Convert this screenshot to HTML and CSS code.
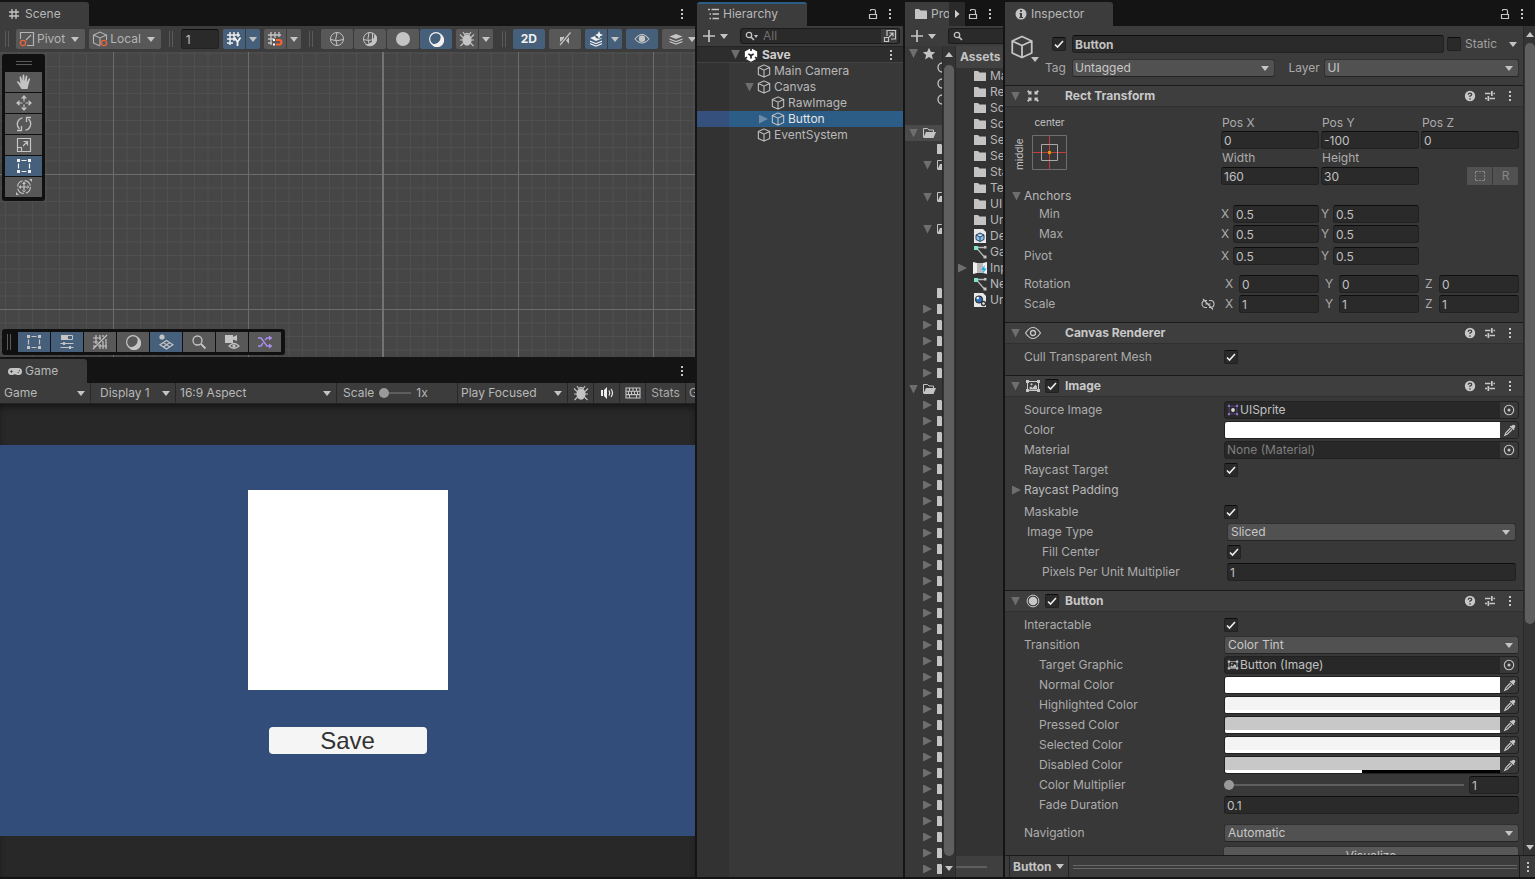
FILE: index.html
```html
<!DOCTYPE html>
<html lang="en">
<head>
<meta charset="utf-8">
<title>Editor</title>
<link rel="stylesheet" href="styles.css">
</head>
<body>
<svg class="defs" aria-hidden="true">
  <symbol id="i-hash" viewBox="0 0 12 12"><path d="M4 1v10M8 1v10M1 4h10M1 8h10" fill="none" stroke="currentColor" stroke-width="1.3"/></symbol>
  <symbol id="i-dots" viewBox="0 0 14 14"><path d="M6 2h2v2H6zM6 6h2v2H6zM6 10h2v2H6z" fill="currentColor"/></symbol>
  <symbol id="i-lock" viewBox="0 0 14 14"><path d="M3.500 7.500h7v4h-7zM4.500 4V3.500q0-1 1-1h2.500q1.500 0 1.500 1.500v3.500" fill="none" stroke="currentColor" stroke-width="1.200"/></symbol>
  <symbol id="i-pivot" viewBox="0 0 16 16"><path d="M1.500 8V1.500h13v13H8M7 9l5-5" fill="none" stroke="currentColor" stroke-width="1.200"/><circle cx="4" cy="12" r="2.600" fill="none" stroke="#e8633a" stroke-width="1.400"/></symbol>
  <symbol id="i-local" viewBox="0 0 16 16"><path d="M8 15L1.500 12V4L8 1l6.500 3v5M1.500 4L8 7l6.500-3M8 7v7" fill="none" stroke="currentColor" stroke-width="1.100"/><circle cx="12" cy="12" r="2.600" fill="none" stroke="#e8633a" stroke-width="1.400"/></symbol>
  <symbol id="i-gridy" viewBox="0 0 16 16"><path d="M4 1v13M8 1v9M12 1v5M1 4h13M1 8h8M1 12h6" fill="none" stroke="currentColor" stroke-width="1.400"/><path d="M8.500 6.500l3 4.500 3-4.500M11.500 11v4" fill="none" stroke="currentColor" stroke-width="1.800"/></symbol>
  <symbol id="i-snap" viewBox="0 0 16 16"><path d="M4 1v13M8 1v6M12 1v5M1 4h13M1 8h6M1 12h4" fill="none" stroke="currentColor" stroke-width="1.300"/><path d="M9 9h3.200a2.200 2.200 0 010 4.500H9" fill="none" stroke="#ff5f34" stroke-width="2"/><path d="M6 8h2v2H6zM6 12.500h2v2H6z" fill="#fff"/></symbol>
  <symbol id="i-wire" viewBox="0 0 16 16"><g fill="none" stroke="currentColor"><circle cx="8" cy="8" r="6.500"/><path d="M1.500 8.500q6.500 2.500 13 0M8 1.500Q5.500 8 8 14.500"/></g></symbol>
  <symbol id="i-wireshade" viewBox="0 0 16 16"><path d="M12.500 2.500A7 7 0 013 13.500Q12 13 12.500 2.500z" fill="currentColor"/><g fill="none" stroke="currentColor"><circle cx="8" cy="8" r="6.500"/><path d="M1.500 8.500q5 2 10 0M7 1.500Q5 8 7 13M10.500 2v8"/></g></symbol>
  <symbol id="i-disc" viewBox="0 0 16 16"><circle cx="8" cy="8" r="7" fill="currentColor"/></symbol>
  <symbol id="i-moon" viewBox="0 0 16 16"><circle cx="8" cy="8" r="6.400" fill="none" stroke="currentColor" stroke-width="1.200"/><path d="M12 2.800A7 7 0 113 12.500Q6 14 9.500 12 14 9 12 2.800z" fill="currentColor"/></symbol>
  <symbol id="i-bug" viewBox="0 0 16 16"><ellipse cx="8" cy="9" rx="4.600" ry="5.800" fill="currentColor"/><path d="M5 4q3-3.500 6 0M4 1l2 3M12 1l-2 3M1 3.500l3 3M15 3.500l-3 3M1 9h3M15 9h-3M1.500 15l3-3M14.500 15l-3-3" fill="none" stroke="currentColor" stroke-width="1.100"/></symbol>
  <symbol id="i-mute" viewBox="0 0 16 16"><path d="M13.500 1.500L3 14" stroke="currentColor" stroke-width="1.200"/><path d="M3 6h3l1-1v2l-3 3.500H3zM9 9.500l3-3.500v7z" fill="currentColor"/></symbol>
  <symbol id="i-fx" viewBox="0 0 16 16"><path d="M2 7l5-2 1 2 3 1 2-1 1 .5-6 2.500zM2 9.500l6 2.500 6-2.500v1.200L8 13.200 2 10.700zM2 12l6 2.500 6-2.500v1.200L8 15.700 2 13.200zM11 0l1.200 2.800L15 4l-2.800 1.200L11 8 9.800 5.200 7 4l2.800-1.200z" fill="currentColor"/></symbol>
  <symbol id="i-eye" viewBox="0 0 16 16"><path d="M1 8q7-9 14 0-7 8-14 0z" fill="none" stroke="currentColor" stroke-width="1.100"/><circle cx="8" cy="7.800" r="3.200" fill="currentColor"/></symbol>
  <symbol id="i-eyering" viewBox="0 0 16 16"><path d="M.5 8q7.500-11 15 0-7.500 11-15 0z" fill="none" stroke="currentColor" stroke-width="1.200"/><circle cx="8" cy="8" r="2.500" fill="none" stroke="currentColor" stroke-width="1.300"/></symbol>
  <symbol id="i-layers" viewBox="0 0 16 16"><path d="M8 3l6.500 2.500L8 8 1.500 5.500zM1.500 7.500L8 10l6.500-2.500v1.300L8 11.300 1.500 8.800zM1.500 10L8 12.500 14.500 10v1.300L8 13.800 1.500 11.300z" fill="currentColor"/></symbol>
  <symbol id="i-hand" viewBox="0 0 16 16"><path d="M5.500 15L3 11 .8 7.800q.8-1.200 2 0L4.500 9.500 3.500 3q.9-1.300 1.700 0L6.300 7 6.600 1q.9-1 1.700 0L8.500 7l1.300-5q1-.9 1.600.2L10.800 8l2-3.500q1-.6 1.400.3L12.700 10 11.500 15z" fill="currentColor"/></symbol>
  <symbol id="i-move" viewBox="0 0 16 16"><path d="M8 0l3 3.500H5zM8 16l3-3.500H5zM0 8l3.500-3v6zM16 8l-3.500-3v6zM7.400 3h1.200v3.500H7.400zM7.400 9.500h1.200V13H7.400zM3 7.400h3.500v1.200H3zM9.500 7.400H13v1.200H9.500z" fill="currentColor"/></symbol>
  <symbol id="i-rotate" viewBox="0 0 16 16"><path d="M6.500 1.800A6.500 6.500 0 003.500 13M9.500 14.200A6.500 6.500 0 0012.500 3M1 14.500h4.500V10M15 1.500h-4.500V6" fill="none" stroke="currentColor" stroke-width="1.300"/></symbol>
  <symbol id="i-scale" viewBox="0 0 16 16"><path d="M1.500 1.500h13v13h-13zM1.500 10.500h4v4M7 9l4.500-4.500M7.500 4.500h4v4" fill="none" stroke="currentColor" stroke-width="1.200"/></symbol>
  <symbol id="i-rect" viewBox="0 0 16 16"><path d="M1 1h3v3H1zM12 1h3v3h-3zM1 12h3v3H1zM12 12h3v3h-3z" fill="currentColor"/><path d="M5.500 2.500h5M5.500 13.500h5M2.500 5.500v5M13.500 5.500v5" stroke="currentColor" stroke-width="1.200"/></symbol>
  <symbol id="i-transform" viewBox="0 0 16 16"><circle cx="8" cy="8" r="6.400" fill="none" stroke="currentColor" stroke-width="1.100" stroke-dasharray="8 2"/><path d="M8 2.500l2 2.500H6zM8 13.500l2-2.500H6zM2.500 8L5 6v4zM13.500 8L11 6v4zM7.400 4h1.200v8H7.400zM4 7.400h8v1.200H4zM13 0h3v3zM0 13v3h3z" fill="currentColor"/></symbol>
  <symbol id="i-sliders2" viewBox="0 0 16 16"><path d="M2.500 1.500h11v4h-11z" fill="none" stroke="currentColor"/><path d="M2 1h7v5H2zM4 8h2v3H4zM10 12h2v3h-2z" fill="currentColor"/><path d="M1.500 9.500h13M1.500 13.500h13" stroke="currentColor" stroke-width="1.200"/></symbol>
  <symbol id="i-gridoff" viewBox="0 0 16 16"><path d="M4 1v9M8 1v5M11 7v8M14 5v10M8 10v5M1 4h8M1 8h5M1 12h3M15 1L1 15M9 12h6M11 1v2M6 12h3" fill="none" stroke="currentColor" stroke-width="1.200"/></symbol>
  <symbol id="i-gizmo" viewBox="0 0 16 16"><circle cx="4" cy="3" r="2.600" fill="currentColor"/><path d="M8.500 6.500L15 10.700 8.500 15 2 10.700zM5.300 8.500l6.500 4.400M11.800 8.500l-6.500 4.400" fill="none" stroke="currentColor" stroke-width="1.200"/></symbol>
  <symbol id="i-search" viewBox="0 0 16 16"><circle cx="6.500" cy="6.500" r="4.500" fill="none" stroke="currentColor" stroke-width="1.300"/><path d="M10 10l4.500 4.500" stroke="currentColor" stroke-width="1.800"/></symbol>
  <symbol id="i-find" viewBox="0 0 12 10"><circle cx="4" cy="4" r="2.700" fill="none" stroke="currentColor" stroke-width="1.300"/><path d="M6 6l3 3" stroke="currentColor" stroke-width="1.600"/></symbol>
  <symbol id="i-cam" viewBox="0 0 16 16"><path d="M1 1h8v2l4-2v6L9 5.500V9H1z" fill="currentColor"/><path d="M5 12q5-5 10 0-5 4.500-10 0z" fill="none" stroke="currentColor" stroke-width="1.200"/><circle cx="10" cy="12" r="1.600" fill="currentColor"/></symbol>
  <symbol id="i-shuffle" viewBox="0 0 16 16"><path d="M1 4h3l6 8h3M1 12h3l2-3M8 6l2-2h3" fill="none" stroke="#ab8df2" stroke-width="1.400"/><path d="M12 1.500L15.500 4 12 6.500zM12 9.500l3.500 2.500-3.500 2.500z" fill="#ab8df2"/></symbol>
  <symbol id="i-pad" viewBox="0 0 16 10"><path d="M4 1h8a4 4 0 010 8c-2 0-2-1-4-1S6 9 4 9a4 4 0 010-8z" fill="currentColor"/><path d="M2.500 5h3M4 3.500v3" stroke="#3c3c3c"/><path d="M11 5.500h1.200v1.200H11zM12.500 3.500h1.200v1.200h-1.200z" fill="#3c3c3c"/></symbol>
  <symbol id="i-audio" viewBox="0 0 16 16"><path d="M2 5h2v6H2zM5 5l3-3v12l-3-3z" fill="currentColor"/><path d="M10 5.500q1.500 2.500 0 5M12 4q3 4 0 8" fill="none" stroke="currentColor" stroke-width="1.200"/></symbol>
  <symbol id="i-keys" viewBox="0 0 16 12"><path d="M1 1h14v10H1zM1 4.300h14M1 7.600h14M4.500 1v3.300M8 1v3.300M11.500 1v3.300M3.500 4.300v3.300M6.500 4.300v3.300M9.500 4.300v3.300M12.500 4.300v3.300M4.500 7.600V11M11.500 7.600V11" fill="none" stroke="currentColor" stroke-width="1.100"/></symbol>
  <symbol id="i-tree" viewBox="0 0 12 12"><path d="M1 1.500h2M4.500 1.500H12M2.500 6H4M5.500 6H12M2.500 10.500H4M5.500 10.500H12" stroke="currentColor" stroke-width="1.300"/></symbol>
  <symbol id="i-plus" viewBox="0 0 12 12"><path d="M6 0v12M0 6h12" stroke="currentColor" stroke-width="1.700"/></symbol>
  <symbol id="i-open" viewBox="0 0 14 14"><path d="M4 7V1.500h8.500v8.500H8M1.500 8.500h4v4h-4zM6 8l4-4M6.500 4H10v3.500" fill="none" stroke="currentColor" stroke-width="1.200"/></symbol>
  <symbol id="i-unity" viewBox="0 0 16 16"><path d="M8 .3L15 4v8l-7 3.700L1 12V4z" fill="#fff"/><path d="M8 8.500V12M8 8.500L5 6.800M8 8.500l3-1.700M8 0v3.500M0 12.500L3.500 10.500M16 12.500l-3.500-2" stroke="#2c2c2c" stroke-width="2"/></symbol>
  <symbol id="i-cube" viewBox="0 0 16 16"><path d="M8 1l6.500 3v8L8 15l-6.500-3V4zM1.500 4L8 7l6.500-3M8 7v8" fill="none" stroke="currentColor" stroke-width="1.200" stroke-linejoin="round"/></symbol>
  <symbol id="i-folder" viewBox="0 0 14 12"><path d="M1 1.500Q1 1 1.500 1H5l1.500 1.500h6q.5 0 .5.500v7.500q0 .5-.5.500h-11Q1 11 1 10.500z" fill="currentColor"/></symbol>
  <symbol id="i-folderopen" viewBox="0 0 14 12"><path d="M1.500 10V1.500h4L7 3h4.500v2" fill="none" stroke="currentColor"/><path d="M4 5h10l-2.500 6H1.200z" fill="currentColor"/></symbol>
  <symbol id="i-star" viewBox="0 0 14 14"><path d="M7 .8l1.800 4 4.400.4-3.300 2.900 1 4.300L7 10.100l-3.900 2.300 1-4.300L.8 5.200l4.400-.4z" fill="currentColor"/></symbol>
  <symbol id="i-prefab" viewBox="0 0 14 14"><path d="M1 0h9l3 3v11H1z" fill="#e8e8e8"/><path d="M7 4l4 2v4.500l-4 2-4-2V6zM3 6l4 2 4-2M7 8v4" fill="#8cc4f2" stroke="#24405e"/></symbol>
  <symbol id="i-curve" viewBox="0 0 14 14"><path d="M3 2.500h9L3 2.500l8 9" fill="none" stroke="#b9b9b9" stroke-width="1.300"/><path d="M1 1h4v4H1z" fill="#7fe6cf"/><path d="M11 1h2.500v2.500H11zM10.500 10.500h3v3h-3z" fill="#c4c4c4"/></symbol>
  <symbol id="i-input" viewBox="0 0 14 14"><path d="M0 1l4 1v10l-4 1zM10 2l4-1v12l-4-1z" fill="#f0f0f0"/><path d="M4 2h6v10H4z" fill="#b8b8b8"/><path d="M11.500 4L8.500 9h2l-1 4 4-5.500h-2z" fill="#17a9e6"/></symbol>
  <symbol id="i-asset" viewBox="0 0 14 14"><path d="M1 0h9l3 3v11H1z" fill="#e8e8e8"/><circle cx="6" cy="6.500" r="3.600" fill="#2b6cb5" stroke="#222"/><circle cx="10.500" cy="10.500" r="2" fill="#e8e8e8" stroke="#333" stroke-width="1.300"/><circle cx="4.800" cy="5" r="1.200" fill="#fff"/></symbol>
  <symbol id="i-info" viewBox="0 0 14 14"><circle cx="7" cy="7" r="5.500" fill="currentColor"/><path d="M6 3h2v1.800H6zM5.500 6H8v4h1v1H5.300v-1H6V7h-.5z" fill="#3c3c3c"/></symbol>
  <symbol id="i-help" viewBox="0 0 14 14"><circle cx="7" cy="7" r="5.200" fill="currentColor"/><path d="M5.300 5.700q0-1.500 1.700-1.500t1.700 1.300q0 .8-1.700 1.500v1M7 9.300v1.400" fill="none" stroke="#3e3e3e" stroke-width="1.300"/></symbol>
  <symbol id="i-preset" viewBox="0 0 14 14"><path d="M2 4.500h5.500M10.500 4.500H12M2 9.500h2M6.500 9.500H12" stroke="currentColor" stroke-width="1.300"/><path d="M8 2h1.700v5H8zM4.500 7h1.700v5H4.500z" fill="currentColor"/></symbol>
  <symbol id="i-rt" viewBox="0 0 16 16"><path id="w" d="M2 3.500L3.500 2l1.300 1.500L6.500 3v3.500H3l.5-1.700zM14 3.500L12.500 2l-1.300 1.500L9.500 3v3.500H13l-.5-1.700zM2 12.500L3.500 14l1.300-1.500 1.700.5V9.500H3l.5 1.700zM14 12.500L12.500 14l-1.300-1.500-1.700.5V9.500H13l-.5 1.700z" fill="currentColor"/></symbol>
  <symbol id="i-image" viewBox="0 0 16 16"><path d="M2.500 3.500h11v9h-11z" fill="none" stroke="currentColor"/><path d="M1 2h3v3H1zM12 2h3v3h-3zM1 11h3v3H1zM12 11h3v3h-3zM4.500 11.500V9.500L6 8.500 7.500 10l3-3.500 1.500 2v3z" fill="currentColor"/><circle cx="6.500" cy="6.300" r="1.100" fill="currentColor"/></symbol>
  <symbol id="i-radio" viewBox="0 0 16 16"><circle cx="8" cy="8" r="5.900" fill="none" stroke="currentColor"/><circle cx="8" cy="8" r="4.300" fill="currentColor"/></symbol>
  <symbol id="i-sprite" viewBox="0 0 14 14"><path d="M2.500 2.500h9v9h-9z" fill="none" stroke="#5c4a86"/><path d="M1 1h2.500v2.500H1zM10.500 1H13v2.500h-2.500zM1 10.500h2.500V13H1zM10.500 10.500H13V13h-2.500z" fill="#8b6cc9"/><circle cx="7" cy="7" r="2.200" fill="#d8d8d8"/></symbol>
  <symbol id="i-target" viewBox="0 0 14 14"><circle cx="7" cy="7" r="4.700" fill="none" stroke="currentColor" stroke-width="1.100"/><circle cx="7" cy="7" r="1.500" fill="currentColor"/></symbol>
  <symbol id="i-dropper" viewBox="0 0 14 14"><path d="M9.500 3q2-2 3.300-.7T12 5.500l.6.800-1 1L7.800 3.500l1-1z" fill="currentColor"/><path d="M8.500 5L4 9.500l-1.200 2.700L5.500 11 10 6.500" fill="none" stroke="currentColor" stroke-width="1.200"/></symbol>
  <symbol id="i-unlink" viewBox="0 0 14 14"><path d="M6 10.500H4.500a3.500 3.500 0 010-7H6M8 3.500h1.500a3.500 3.500 0 010 7H8M4.500 7h5M2 2l10 10.500" fill="none" stroke="currentColor" stroke-width="1.100"/></symbol>
  <symbol id="i-blue" viewBox="0 0 14 14"><path d="M2.500 5V2.500H5M9 2.500h2.500V5M11.500 9v2.500H9M5 11.500H2.500V9M6 2.500h2M6 11.500h2M2.500 6v2M11.500 6v2" fill="none" stroke="currentColor"/></symbol>
</svg>

<main class="editor">
  <div class="left">
    <section class="panel scene" aria-label="Scene">
      <header class="tabs"><button class="tab scene-tab"><svg class="s12"><use href="#i-hash"/></svg>Scene</button><button class="bare push" aria-label="Scene menu"><svg class="s14"><use href="#i-dots"/></svg></button></header>
      <div class="scene-bar">
        <i class="grip"></i>
        <button class="tool text">
          <svg class="s16"><use href="#i-pivot"/></svg>Pivot<i class="caret"></i></button>
        <button class="tool text">
          <svg class="s16"><use href="#i-local"/></svg>Local<i class="caret"></i></button>
        <i class="grip mid"></i>
        <input class="field snap" value="1" aria-label="Grid size">
        <span class="split"><button class="tool half on" aria-label="Grid snapping"><svg class="s16"><use href="#i-gridy"/></svg></button><button class="tool drop on dim" aria-label="Grid options"><i class="caret"></i></button></span>
        <span class="split"><button class="tool half" aria-label="Snap"><svg class="s16"><use href="#i-snap"/></svg></button><button class="tool drop" aria-label="Snap options"><i class="caret"></i></button></span>
        <i class="grip mid"></i>
        <span class="split">
          <button class="tool" aria-label="Wireframe"><svg class="s16"><use href="#i-wire"/></svg></button>
          <button class="tool" aria-label="Shaded wireframe"><svg class="s16"><use href="#i-wireshade"/></svg></button>
          <button class="tool" aria-label="Unlit"><svg class="s16"><use href="#i-disc"/></svg></button>
          <button class="tool on" aria-label="Shaded"><svg class="s16"><use href="#i-moon"/></svg></button>
        </span>
        <span class="split"><button class="tool half" aria-label="Debug draw"><svg class="s16"><use href="#i-bug"/></svg></button><button class="tool drop" aria-label="Debug options"><i class="caret"></i></button></span>
        <i class="grip mid late"></i>
        <button class="tool on strong">2D</button>
        <button class="tool dim" aria-label="Audio"><svg class="s16"><use href="#i-mute"/></svg></button>
        <span class="split"><button class="tool half on" aria-label="Effects"><svg class="s16"><use href="#i-fx"/></svg></button><button class="tool drop on dim" aria-label="Effects options"><i class="caret"></i></button></span>
        <button class="tool on dim" aria-label="Visibility"><svg class="s16"><use href="#i-eye"/></svg></button>
        <button class="tool last" aria-label="Layers"><svg class="s16"><use href="#i-layers"/></svg><i class="caret"></i></button>
      </div>
      <div class="viewport">
        <svg class="grid" aria-hidden="true">
          <defs><pattern id="cells" x="113" y="122" width="135" height="135" patternUnits="userSpaceOnUse">
            <path d="M14 0v135M27.500 0v135M41 0v135M54.500 0v135M68 0v135M81.500 0v135M95 0v135M108.500 0v135M122 0v135M0 14h135M0 27.500h135M0 41h135M0 54.500h135M0 68h135M0 81.500h135M0 95h135M0 108.500h135M0 122h135" stroke="#4f4f4f"/>
            <path d="M.5 0v135M0 .5h135" stroke="#6c6c6c"/></pattern></defs>
          <rect width="100%" height="100%" fill="url(#cells)"/>
          <path d="M383 0v400" stroke="#737373" stroke-width="2"/>
        </svg>
        <div class="palette tall">
          <i class="handle"></i>
          <button class="tool" aria-label="View"><svg class="s16"><use href="#i-hand"/></svg></button>
          <button class="tool" aria-label="Move"><svg class="s16"><use href="#i-move"/></svg></button>
          <button class="tool" aria-label="Rotate"><svg class="s16"><use href="#i-rotate"/></svg></button>
          <button class="tool" aria-label="Scale"><svg class="s16"><use href="#i-scale"/></svg></button>
          <button class="tool on" aria-label="Rect"><svg class="s16"><use href="#i-rect"/></svg></button>
          <button class="tool" aria-label="Transform"><svg class="s16"><use href="#i-transform"/></svg></button>
        </div>
        <div class="palette wide">
          <i class="grip"></i>
          <button class="tool on dim" aria-label="Tools"><svg class="s16"><use href="#i-rect"/></svg></button>
          <button class="tool on dim" aria-label="Tool settings"><svg class="s16"><use href="#i-sliders2"/></svg></button>
          <button class="tool" aria-label="Grid and snap"><svg class="s16"><use href="#i-gridoff"/></svg></button>
          <button class="tool" aria-label="Draw modes"><svg class="s16"><use href="#i-moon"/></svg></button>
          <button class="tool on dim" aria-label="View options"><svg class="s16"><use href="#i-gizmo"/></svg></button>
          <button class="tool" aria-label="Search"><svg class="s16"><use href="#i-search"/></svg></button>
          <button class="tool" aria-label="Cameras"><svg class="s16"><use href="#i-cam"/></svg></button>
          <button class="tool" aria-label="Shuffle"><svg class="s16"><use href="#i-shuffle"/></svg></button>
        </div>
      </div>
    </section>

    <section class="panel game" aria-label="Game">
      <header class="tabs"><button class="tab game-tab"><svg class="pad"><use href="#i-pad"/></svg>Game</button><button class="bare push" aria-label="Game menu"><svg class="s14"><use href="#i-dots"/></svg></button></header>
      <div class="game-bar">
        <span class="pick g1"><select aria-label="Mode"><option>Game</option></select></span>
        <span class="pick g2"><select aria-label="Display"><option>Display 1</option></select></span>
        <span class="pick g3"><select aria-label="Aspect"><option>16:9 Aspect</option></select></span>
        <label class="zoom">Scale<input type="range" class="range" min="1" max="5" value="1"><span>1x</span></label>
        <span class="pick g4"><select aria-label="Play mode"><option>Play Focused</option></select></span>
        <button class="gbtn" aria-label="Debug"><svg class="s16"><use href="#i-bug"/></svg></button>
        <button class="gbtn lit" aria-label="Sound"><svg class="s16"><use href="#i-audio"/></svg></button>
        <button class="gbtn" aria-label="Shortcuts"><svg class="keys"><use href="#i-keys"/></svg></button>
        <button class="gbtn stats">Stats</button>
        <button class="gbtn giz">Gizmos</button>
      </div>
      <div class="stage">
        <div class="screen"><div class="raw"></div><button class="save">Save</button></div>
      </div>
    </section>
  </div>

  <section class="panel hierarchy" aria-label="Hierarchy">
    <header class="tabs"><button class="tab active"><svg class="s12"><use href="#i-tree"/></svg>Hierarchy</button><span class="push pair"><button class="bare" aria-label="Lock"><svg class="s14"><use href="#i-lock"/></svg></button><button class="bare" aria-label="Menu"><svg class="s14"><use href="#i-dots"/></svg></button></span></header>
    <div class="find-bar">
      <button class="bare add" aria-label="Create"><svg class="s12"><use href="#i-plus"/></svg><i class="caret"></i></button>
      <label class="find"><svg class="mag"><use href="#i-find"/></svg><i class="caret tiny"></i><input placeholder="All" aria-label="Search hierarchy"><button class="bare opener" aria-label="Open search"><svg class="s14"><use href="#i-open"/></svg></button></label>
    </div>
    <div class="nodes">
      <div class="node root"><i class="tri down"></i><svg class="s14"><use href="#i-unity"/></svg><b>Save</b><button class="bare push" aria-label="Scene options"><svg class="s14"><use href="#i-dots"/></svg></button></div>
      <div class="node l1"><i class="tri"></i><svg class="s14"><use href="#i-cube"/></svg>Main Camera</div>
      <div class="node l1"><i class="tri down"></i><svg class="s14"><use href="#i-cube"/></svg>Canvas</div>
      <div class="node l2"><i class="tri"></i><svg class="s14"><use href="#i-cube"/></svg>RawImage</div>
      <div class="node l2 selected"><i class="tri right"></i><svg class="s14"><use href="#i-cube"/></svg>Button</div>
      <div class="node l1"><i class="tri"></i><svg class="s14"><use href="#i-cube"/></svg>EventSystem</div>
    </div>
  </section>

  <section class="panel project" aria-label="Project">
    <header class="tabs"><button class="tab proj-tab"><svg class="fold"><use href="#i-folder"/></svg>Project</button><button class="bare more" aria-label="More tabs"><i class="tri right"></i></button><span class="push pair"><button class="bare" aria-label="Lock"><svg class="s14"><use href="#i-lock"/></svg></button><button class="bare" aria-label="Menu"><svg class="s14"><use href="#i-dots"/></svg></button></span></header>
    <div class="find-bar">
      <button class="bare add" aria-label="Create"><svg class="s12"><use href="#i-plus"/></svg><i class="caret"></i></button>
      <label class="find cut"><svg class="mag"><use href="#i-find"/></svg><input aria-label="Search project"></label>
    </div>
    <div class="browser">
      <div class="folders" id="folders"></div>
      <div class="scroll"><i class="caret up"></i><i class="thumb"></i><i class="caret"></i></div>
      <div class="assets">
        <b class="crumb">Assets</b>
        <div class="files" id="files"></div>
        <div class="size"><i></i></div>
      </div>
    </div>
  </section>

  <section class="panel inspector" aria-label="Inspector">
    <header class="tabs"><button class="tab insp-tab"><svg class="s14"><use href="#i-info"/></svg>Inspector</button><span class="push pair"><button class="bare" aria-label="Lock"><svg class="s14"><use href="#i-lock"/></svg></button><button class="bare" aria-label="Menu"><svg class="s14"><use href="#i-dots"/></svg></button></span></header>
    <div class="insp-body">
      <div class="components">
        <div class="object">
          <button class="bare kind" aria-label="Icon"><svg class="s24"><use href="#i-cube"/></svg><i class="caret"></i></button>
          <div class="object-rows">
            <div class="line"><input type="checkbox" class="check" checked aria-label="Active"><input class="field name" value="Button" aria-label="Name"><label class="static"><input type="checkbox" class="check">Static</label><button class="bare st" aria-label="Static options"><i class="caret"></i></button></div>
            <div class="line"><label for="tag" class="tag">Tag</label><span class="pick box tagbox"><select id="tag"><option>Untagged</option></select></span><label for="layer" class="layer">Layer</label><span class="pick box"><select id="layer"><option>UI</option></select></span></div>
          </div>
        </div>

        <h2 class="comp"><i class="tri down"></i><svg class="s16"><use href="#i-rt"/></svg><span></span><span class="title">Rect Transform</span><span class="acts"><svg class="s14"><use href="#i-help"/></svg><svg class="s14"><use href="#i-preset"/></svg><svg class="s14"><use href="#i-dots"/></svg></span></h2>
        <div class="body rect">
          <div class="rect-top">
            <div class="anchor"><span class="mid-label">middle</span><span class="ctr-label">center</span>
              <svg class="preset" viewBox="0 0 35 35"><path d="M.5.5h34v34H.5z" fill="none" stroke="#6e6e6e"/><path d="M17.500 1v33M1 17.500h33" stroke="#c43c3c"/><path d="M9.500 9.500h16v16h-16z" fill="none" stroke="#a8a8a8"/><path d="M16 16h3v3h-3z" fill="#d99a00"/></svg></div>
            <div class="pos">
              <label for="px">Pos X</label><label for="py">Pos Y</label><label for="pz">Pos Z</label>
              <input class="field" id="px" value="0"><input class="field" id="py" value="-100"><input class="field" id="pz" value="0">
              <label for="pw">Width</label><label for="ph">Height</label><span></span>
              <input class="field" id="pw" value="160"><input class="field" id="ph" value="30"><span class="modes"><button aria-label="Blueprint mode"><svg class="s14"><use href="#i-blue"/></svg></button><button>R</button></span>
            </div>
          </div>
          <div class="fold-row anchors"><i class="tri down"></i>Anchors</div>
          <div class="vec"><span class="in2">Min</span><label>X<input class="field" value="0.5"></label><label>Y<input class="field" value="0.5"></label></div>
          <div class="vec"><span class="in2">Max</span><label>X<input class="field" value="0.5"></label><label>Y<input class="field" value="0.5"></label></div>
          <div class="vec gap2"><span class="in1">Pivot</span><label>X<input class="field" value="0.5"></label><label>Y<input class="field" value="0.5"></label></div>
          <div class="vec v3 gap8"><span class="in1">Rotation</span><label>X<input class="field" value="0"></label><label>Y<input class="field" value="0"></label><label>Z<input class="field" value="0"></label></div>
          <div class="vec v3"><span class="in1">Scale<svg class="s14"><use href="#i-unlink"/></svg></span><label>X<input class="field" value="1"></label><label>Y<input class="field" value="1"></label><label>Z<input class="field" value="1"></label></div>
        </div>

        <h2 class="comp"><i class="tri down"></i><svg class="s16"><use href="#i-eyering"/></svg><span></span><span class="title">Canvas Renderer</span><span class="acts"><svg class="s14"><use href="#i-help"/></svg><svg class="s14"><use href="#i-preset"/></svg><svg class="s14"><use href="#i-dots"/></svg></span></h2>
        <div class="body">
          <label class="row"><span class="in1">Cull Transparent Mesh</span><input type="checkbox" class="check" checked></label>
        </div>

        <h2 class="comp"><i class="tri down"></i><svg class="s16"><use href="#i-image"/></svg><input type="checkbox" class="check" checked aria-label="Image enabled"><span class="title">Image</span><span class="acts"><svg class="s14"><use href="#i-help"/></svg><svg class="s14"><use href="#i-preset"/></svg><svg class="s14"><use href="#i-dots"/></svg></span></h2>
        <div class="body">
          <div class="row"><span class="in1">Source Image</span><button class="obj"><svg class="s12"><use href="#i-sprite"/></svg>UISprite<svg class="s14 end"><use href="#i-target"/></svg></button></div>
          <div class="row"><span class="in1">Color</span><button class="color" aria-label="Color"><i class="swatch white"></i><svg class="s14 end"><use href="#i-dropper"/></svg></button></div>
          <div class="row"><span class="in1">Material</span><button class="obj none">None (Material)<svg class="s14 end"><use href="#i-target"/></svg></button></div>
          <label class="row"><span class="in1">Raycast Target</span><input type="checkbox" class="check" checked></label>
          <div class="fold-row"><i class="tri right"></i>Raycast Padding</div>
          <label class="row gap2"><span class="in1">Maskable</span><input type="checkbox" class="check" checked></label>
          <label class="row shift"><span class="in1">Image Type</span><span class="pick box"><select><option>Sliced</option></select></span></label>
          <label class="row shift"><span class="in2">Fill Center</span><input type="checkbox" class="check" checked></label>
          <label class="row shift"><span class="in2">Pixels Per Unit Multiplier</span><input class="field" value="1"></label>
        </div>

        <h2 class="comp"><i class="tri down"></i><svg class="s16"><use href="#i-radio"/></svg><input type="checkbox" class="check" checked aria-label="Button enabled"><span class="title">Button</span><span class="acts"><svg class="s14"><use href="#i-help"/></svg><svg class="s14"><use href="#i-preset"/></svg><svg class="s14"><use href="#i-dots"/></svg></span></h2>
        <div class="body">
          <label class="row"><span class="in1">Interactable</span><input type="checkbox" class="check" checked></label>
          <label class="row"><span class="in1">Transition</span><span class="pick box"><select><option>Color Tint</option></select></span></label>
          <div class="row"><span class="in2">Target Graphic</span><button class="obj"><svg class="s12"><use href="#i-image"/></svg>Button (Image)<svg class="s14 end"><use href="#i-target"/></svg></button></div>
          <div class="row"><span class="in2">Normal Color</span><button class="color" aria-label="Normal Color"><i class="swatch white"></i><svg class="s14 end"><use href="#i-dropper"/></svg></button></div>
          <div class="row"><span class="in2">Highlighted Color</span><button class="color" aria-label="Highlighted Color"><i class="swatch pale"></i><svg class="s14 end"><use href="#i-dropper"/></svg></button></div>
          <div class="row"><span class="in2">Pressed Color</span><button class="color" aria-label="Pressed Color"><i class="swatch grey"></i><svg class="s14 end"><use href="#i-dropper"/></svg></button></div>
          <div class="row"><span class="in2">Selected Color</span><button class="color" aria-label="Selected Color"><i class="swatch pale"></i><svg class="s14 end"><use href="#i-dropper"/></svg></button></div>
          <div class="row"><span class="in2">Disabled Color</span><button class="color" aria-label="Disabled Color"><i class="swatch grey half"></i><svg class="s14 end"><use href="#i-dropper"/></svg></button></div>
          <div class="row"><label class="in2" for="mult">Color Multiplier</label><span class="slide"><input type="range" class="range" id="mult" min="1" max="5" value="1"><input class="field" value="1" aria-label="Color multiplier value"></span></div>
          <label class="row"><span class="in2">Fade Duration</span><input class="field" value="0.1"></label>
          <label class="row gap8"><span class="in1">Navigation</span><span class="pick box"><select><option>Automatic</option></select></span></label>
          <div class="row visual"><span></span><button class="wide-btn">Visualize</button></div>
        </div>
      </div>
      <div class="scroll main"><i class="caret up"></i><span class="track"><i class="thumb"></i></span><i class="caret"></i></div>
    </div>
    <footer class="preview"><button class="bare pv">Button<i class="caret"></i></button><i class="lines"></i><button class="bare pv-menu" aria-label="Preview menu"><svg class="s14"><use href="#i-dots"/></svg></button></footer>
  </section>
</main>
<script src="main.js"></script>
</body>
</html>
```
FILE: main.js
```js
const icon = (id, cls) => `<svg class="${cls}"><use href="#i-${id}"/></svg>`;

const tree = ["fav", "query", "query", "query", "", "top", "leaf", "open", "", "open", "", "open", "", "", "", "leaf",
  ...Array(5).fill("closed"), "packages", ...Array(30).fill("closed")];
const rows = {
  "": "",
  fav: `<i class="tri down"></i>${icon("star", "s14")}`,
  query: `<span class="deep">${icon("search", "s16")}</span>`,
  top: `<i class="tri down"></i>${icon("folderopen", "fold")}`,
  packages: `<i class="tri down"></i>${icon("folderopen", "fold")}`,
  leaf: `<span class="deep">${icon("folder", "fold")}</span>`,
  open: `<i class="tri down inner"></i>${icon("folderopen", "fold")}`,
  closed: `<i class="tri right inner"></i>${icon("folder", "fold")}`
};
document.getElementById("folders").innerHTML =
  tree.map(t => `<div class="frow ${t}">${rows[t]}</div>`).join("");

const files = [["folder", "Ma"], ["folder", "Re"], ["folder", "Sc"], ["folder", "Sc"],
  ["folder", "Se"], ["folder", "Se"], ["folder", "Sta"], ["folder", "Te"],
  ["folder", "UI"], ["folder", "Un"], ["prefab", "De"], ["curve", "Ga"], ["input", "Inp"],
  ["curve", "Ne"], ["asset", "Un"]];
document.getElementById("files").innerHTML =
  files.map(([k, n]) => `<div class="file"><i class="tri${k === "input" ? " right" : ""}"></i>${icon(k, k === "folder" ? "fold" : "s14")}<span>${n}</span></div>`).join("");
```
FILE: styles.css
```css
* { box-sizing: border-box; }
body { margin: 0; background: #141414; color: #b8b8b8; font: 12px/16px Inter, "Liberation Sans", sans-serif; overflow: hidden; }
button, input, select { font: inherit; color: inherit; margin: 0; padding: 0; border: 0; background: none; outline: 0; min-width: 0; }
button { display: flex; align-items: center; justify-content: center; white-space: nowrap; }
svg { display: block; flex: none; }
i { font-style: normal; }
.defs { display: none; }
.mag { width: 12px; height: 10px; }
.s12 { width: 12px; height: 12px; }
.s14 { width: 14px; height: 14px; }
.s16 { width: 16px; height: 16px; }
.s24 { width: 24px; height: 24px; }
.fold { width: 14px; height: 12px; }
.pad { width: 14px; height: 9px; }
.keys { width: 16px; height: 12px; }
.push { margin-left: auto; }
.pair { display: flex; gap: 3px; }

.caret { flex: none; width: 0; height: 0; border: 4px solid transparent; border-top: 5px solid #c4c4c4; border-bottom: 0; }
.caret.up { border-top: 0; border-bottom: 5px solid #c4c4c4; }
.caret.tiny { border-width: 3px 2px 0; margin-left: -3px; margin-right: 5px; }
.tri { flex: none; width: 9px; height: 9px; }
.tri.down { background: #6e6e6e; clip-path: polygon(0 0, 100% 0, 50% 100%); }
.tri.right { background: #6e6e6e; clip-path: polygon(0 0, 100% 50%, 0 100%); }

.editor { display: grid; grid-template-columns: minmax(0, 695fr) minmax(0, 206fr) minmax(0, 98fr) minmax(0, 530fr); gap: 2px; height: 100vh; padding-bottom: 2px; }
.left { display: flex; flex-direction: column; min-height: 0; }
.panel { display: flex; flex-direction: column; min-height: 0; min-width: 0; overflow: hidden; }
.scene { flex: 357 1 0; }
.game { flex: 520 1 0; }
.tabs { display: flex; align-items: stretch; height: 26px; padding: 2px 6px 0 0; flex: none; }
.tab { gap: 6px; padding: 0 29px 0 8px; background: #3c3c3c; border-radius: 0 3px 0 0; }
.scene-tab { gap: 5px; padding-right: 28px; }
.tab.active { border-top: 2px solid #2c5d87; padding: 0 29px 2px 10px; border-radius: 3px 3px 0 0; gap: 4px; }
.tab svg, .bare { color: #c4c4c4; }
.game-tab { gap: 3px; }
.insp-tab { gap: 3px; padding: 0 29px 0 9px; }

.scene-bar { display: flex; align-items: center; gap: 4px; height: 26px; padding-left: 5px; background: #3c3c3c; flex: none; overflow: hidden; }
.grip { flex: none; width: 4px; height: 16px; border: solid #5a5a5a; border-width: 0 1px; margin-right: 3px; }
.grip.mid { margin: 0 4px; }
.grip.mid.late { margin-left: 5px; margin-right: 3px; }
.tool { flex: none; width: 32px; height: 20px; background: #585858; color: #c4c4c4; border-radius: 2px; }
.tool.text { width: auto; gap: 2px; padding: 0 6px 0 3px; color: #b4b4b4; }
.tool.text .caret { margin-left: 4px; }
.tool.on { background: #46607c; color: #f0f0f0; }
.tool.dim, .tool.on.dim { color: #c4c4c4; }
.tool.half { width: 22px; border-radius: 2px 0 0 2px; }
.tool.drop { width: 14px; border-radius: 0 2px 2px 0; }
.tool.strong { font-weight: 700; }
.tool.last { width: 40px; gap: 4px; }
.split { display: flex; gap: 1px; flex: none; }
.field { width: 100%; height: 18px; padding: 0 2px; background: #2a2a2a; border: 1px solid #212121; border-top-color: #0d0d0d; border-radius: 3px; color: #c0c0c0; }
.field.snap { width: 38px; height: 20px; padding: 0 4px; flex: none; }

.viewport { position: relative; flex: 1; min-height: 0; background: #464646; overflow: hidden; }
.grid { position: absolute; inset: 0; width: 100%; height: 100%; }
.palette { position: absolute; left: 2px; display: flex; gap: 1px; background: #101010; border-radius: 3px; }
.palette.tall { top: 2px; flex-direction: column; padding: 7px 3px 4px; }
.palette.tall .tool { width: 37px; }
.palette.wide { bottom: 2px; padding: 3px 4px 3px 5px; align-items: center; }
.palette.wide .grip { margin-right: 6px; }
.palette .tool { border-radius: 0; }
.handle { width: 16px; height: 4px; margin: 0 auto 6px; border: solid #5a5a5a; border-width: 1px 0; }

.game-bar { display: flex; height: 21px; background: #3c3c3c; border-bottom: 1px solid #232323; flex: none; overflow: hidden; }
.game-bar > * { flex: none; border-right: 1px solid #282828; }
.pick { position: relative; display: flex; align-items: center; min-width: 0; }
.pick select { width: 100%; height: 100%; appearance: none; padding: 0 16px 0 4px; }
.pick::after { content: ""; position: absolute; right: 5px; top: 50%; margin-top: -2px; border: 4px solid transparent; border-top: 5px solid #c4c4c4; border-bottom: 0; pointer-events: none; }
.pick option { background: #383838; }
.g1 { width: 91px; }
.g2 { width: 85px; }
.g2 select { padding-left: 9px; }
.g3 { width: 161px; }
.g4 { width: 110px; }
.g4 select { padding-left: 3px; }
.zoom { display: flex; align-items: center; width: 121px; padding-left: 6px; }
.zoom .range { width: 32px; margin: 0 5px; }
.range { appearance: none; height: 12px; background: linear-gradient(#5e5e5e, #5e5e5e) 0 50% / 100% 2px no-repeat; }
.range::-webkit-slider-thumb { appearance: none; width: 10px; height: 10px; border-radius: 50%; background: #999; }
.gbtn { width: 26px; color: #c4c4c4; }
.gbtn.lit { color: #eee; }
.gbtn.stats { width: 40px; color: #aaa; }
.gbtn.giz { width: 60px; justify-content: flex-start; padding-left: 3px; color: #aaa; }
.stage { flex: 1; display: flex; flex-direction: column; justify-content: center; min-height: 0; background: #282828; box-shadow: inset 0 5px 8px -3px #111; }
.screen { aspect-ratio: 16 / 9; background: #324d79; display: flex; flex-direction: column; align-items: center; gap: 37px; padding-top: 45px; }
.raw { width: 200px; height: 200px; background: #fff; }
.save { width: 158px; height: 27px; background: #f5f5f5; border-radius: 4px; color: #323232; font: 24px/27px "Liberation Sans", Arial, sans-serif; }

.find-bar { display: flex; align-items: center; height: 20px; background: #3c3c3c; flex: none; padding-right: 3px; }
.add { gap: 5px; padding: 0 12px 0 6px; }
.find { display: flex; align-items: center; flex: 1; min-width: 0; height: 16px; padding: 0 2px 0 4px; background: #2a2a2a; border: 1px solid #1a1a1a; border-radius: 3px; color: #c4c4c4; }
.find input { flex: 1; width: 20px; }
.find input::placeholder { color: #707070; }
.opener { background: #3c3c3c; padding-left: 2px; }
.project .find-bar { padding-right: 0; }
.cut { border-radius: 3px 0 0 3px; border-right: 0; }

.nodes { flex: 1; background: linear-gradient(90deg, #323232 32px, #383838 32px); border-top: 1px solid #232323; }
.node { display: flex; align-items: center; gap: 4px; height: 16px; padding-left: 34px; }
.node .s14 { color: #c4c4c4; }
.node.root { background: #2d2d2d; border-bottom: 1px solid #424242; color: #d0d0d0; padding-right: 5px; }
.node.l1 { padding-left: 48px; gap: 3px; }
.node.l2 { padding-left: 62px; gap: 3px; }
.node.selected { background: linear-gradient(90deg, #35507c 32px, #2c5d87 32px); color: #e4e4e4; }
.node.selected .tri { background: #6d8aa6; }

.proj-tab { flex: none; width: 44px; padding: 0 0 0 9px; justify-content: flex-start; overflow: hidden; gap: 3px; border-radius: 0; }
.more { width: 16px; background: #2a2a2a; flex: none; }
.more .tri { width: 5px; background: #d0d0d0; }
.browser { flex: 1; display: flex; min-height: 0; background: #333; }
.folders { flex: none; width: 37px; background: #383838; overflow: hidden; }
.frow { display: flex; align-items: center; gap: 4px; height: 16px; padding-left: 4px; color: #c4c4c4; overflow: hidden; }
.frow.fav { height: 15px; }
.frow.top { background: #4a4a4a; }
.deep { padding-left: 27px; }
.inner { margin-left: 14px; }
.scroll { flex: none; width: 14px; display: flex; flex-direction: column; align-items: center; background: #343434; border: solid #2a2a2a; border-width: 0 1px; padding: 6px 0; }
.scroll .thumb { width: 10px; flex: 1; margin: 8px 0 10px; border-radius: 5px; background: #5f5f5f; }
.assets { flex: 1; min-width: 0; display: flex; flex-direction: column; overflow: hidden; }
.crumb { height: 22px; padding: 3px 4px; background: #424242; flex: none; color: #c4c4c4; }
.files { flex: 1; min-height: 0; }
.file { display: flex; align-items: center; height: 16px; padding-left: 2px; white-space: nowrap; color: #c4c4c4; }
.file .tri { margin-right: 6px; }
.file span { padding-left: 3px; color: #b8b8b8; }
.size { height: 21px; background: #3f3f3f; flex: none; padding-top: 10px; }
.size i { display: block; width: 31px; height: 2px; background: #5e5e5e; }

.insp-body { flex: 1; display: flex; min-height: 0; background: #383838; }
.components { flex: 1; min-width: 0; overflow: hidden; }
.object { display: flex; gap: 12px; padding: 9px 4px 8px 5px; background: #3c3c3c; }
.kind { width: 30px; align-items: flex-start; justify-content: flex-start; }
.kind .caret { margin: 22px 0 0 -3px; }
.object-rows { flex: 1; display: flex; flex-direction: column; gap: 6px; min-width: 0; }
.line { display: flex; align-items: center; height: 18px; }
.name { font-weight: 700; flex: 1; margin: 0 3px 0 6px; }
.static { display: flex; align-items: center; gap: 4px; width: 60px; color: #a0a0a0; }
.st { width: 12px; }
.tag { width: 20px; margin-left: -7px; margin-right: 7px; color: #a8a8a8; white-space: nowrap; }
.tagbox { flex: 203 1 0; }
.layer { width: 49px; padding-left: 13px; color: #a8a8a8; }
.layer + .pick { flex: 194 1 0; }
.pick.box { height: 18px; background: #515151; border: 1px solid #303030; border-bottom-color: #242424; border-radius: 3px; }
.pick.box select { padding-left: 2px; color: #c8c8c8; }
.row .pick.box select { padding-left: 3px; }
.check { appearance: none; flex: none; width: 14px; height: 14px; background: #2a2a2a center / 12px 12px no-repeat; border: 1px solid #212121; border-top-color: #0d0d0d; border-radius: 2px; }
.check:checked { background-image: url("data:image/svg+xml,%3Csvg xmlns='http://www.w3.org/2000/svg' viewBox='0 0 12 12'%3E%3Cpath d='M2 6.500l2.500 2.500L10 3' fill='none' stroke='%23eee' stroke-width='1.600'/%3E%3C/svg%3E"); }

.comp { display: grid; grid-template-columns: 21px 14px 23px 1fr auto; align-items: center; justify-items: center; height: 22px; margin: 0; padding-right: 6px; background: #3e3e3e; border-top: 1px solid #1a1a1a; border-bottom: 1px solid #303030; font-size: 12px; color: #c8c8c8; }
.comp > .s16 { justify-self: center; }
.title { justify-self: start; padding-left: 2px; }
.acts { display: flex; gap: 6px; }
.body { padding: 3px 4px 8px 0; color: #acacac; }
.rect { padding-top: 7px; }
.rect-top { display: flex; margin-bottom: 3px; }
.anchor { display: grid; grid-template-columns: 27px 35px; grid-template-rows: 16px 35px; row-gap: 5px; width: 216px; font-size: 10px; color: #c4c4c4; justify-items: center; }
.mid-label { grid-row: 2; writing-mode: vertical-rl; transform: rotate(180deg); line-height: 14px; }
.ctr-label { grid-column: 2; grid-row: 1; }
.preset { grid-column: 2; grid-row: 2; width: 35px; height: 35px; }
.pos { flex: 1; display: grid; grid-template-columns: repeat(3, minmax(0, 1fr)); grid-template-rows: 17px 18px 18px 18px; column-gap: 2px; }
.pos label { padding: 1px 0 0 1px; }
.modes { display: flex; gap: 1px; justify-content: flex-end; padding-right: 1px; }
.modes button { width: 25px; height: 18px; background: #515151; color: #858585; }
.vec { display: grid; grid-template-columns: 214px repeat(3, minmax(0, 1fr)); column-gap: 2px; align-items: center; height: 20px; }
.vec label { display: grid; grid-template-columns: 12px 1fr; align-items: center; }
.v3 label { grid-template-columns: 14px 1fr; padding-left: 4px; }
.vec span { display: flex; justify-content: space-between; align-items: center; padding-right: 4px; }
.vec .s14 { color: #c4c4c4; }
.fold-row { display: flex; align-items: center; gap: 3px; height: 20px; padding-left: 7px; color: #b8b8b8; }
.fold-row.anchors { height: 16px; }
.body .in1 { padding-left: 19px; }
.body .in2 { padding-left: 34px; }
.row { display: grid; grid-template-columns: 219px minmax(0, 1fr); align-items: center; height: 20px; }
.row.shift { padding: 0 3px; }
.gap2 { margin-top: 2px; }
.gap8 { margin-top: 8px; }
.obj, .color { width: 100%; height: 18px; justify-content: flex-start; border: 1px solid #212121; border-radius: 3px; background: #282828; overflow: hidden; }
.obj { padding-left: 2px; color: #c0c0c0; }
.obj svg:first-child:not(.end) { margin-right: 1px; }
.none { color: #7e7e7e; }
.end { width: 18px; height: 16px; margin-left: auto; padding: 1px 2px; background: #383838; color: #c4c4c4; }
.swatch { flex: 1; height: 16px; border-bottom: 3px solid #fff; }
.white { background: #fff; }
.pale { background: #f4f4f4; }
.grey { background: #c8c8c8; }
.swatch.half { border: 0; background: linear-gradient(#c8c8c8, #c8c8c8) 0 0 / 100% 13px no-repeat, linear-gradient(90deg, #fff 50%, #000 50%); }
.slide { display: flex; align-items: center; gap: 5px; }
.slide .range { flex: 1; }
.slide .field { width: 50px; }
.row.visual { grid-template-columns: 218px 1fr; margin-top: 3px; }
.wide-btn { height: 20px; background: #585858; border: 1px solid #303030; border-radius: 3px; color: #c4c4c4; }
.scroll.main { width: 12px; border-width: 0 0 0 1px; padding: 6px 0 5px; }
.track { flex: 1; display: flex; width: 10px; margin: 6px 0; }
.scroll .track .thumb { flex: none; height: 73%; margin: 0; }
.preview { display: flex; align-items: center; height: 22px; flex: none; background: #3c3c3c; border-top: 1px solid #1a1a1a; padding-left: 4px; }
.pv { height: 100%; gap: 4px; padding: 0 4px 0 3px; border: solid #232323; border-width: 0 1px; font-weight: 700; }
.lines { flex: 1; height: 4px; margin: 0 2px 0 4px; border: solid #666; border-width: 1px 0; }
.pv-menu { width: 16px; height: 100%; border-left: 1px solid #1a1a1a; }
```
